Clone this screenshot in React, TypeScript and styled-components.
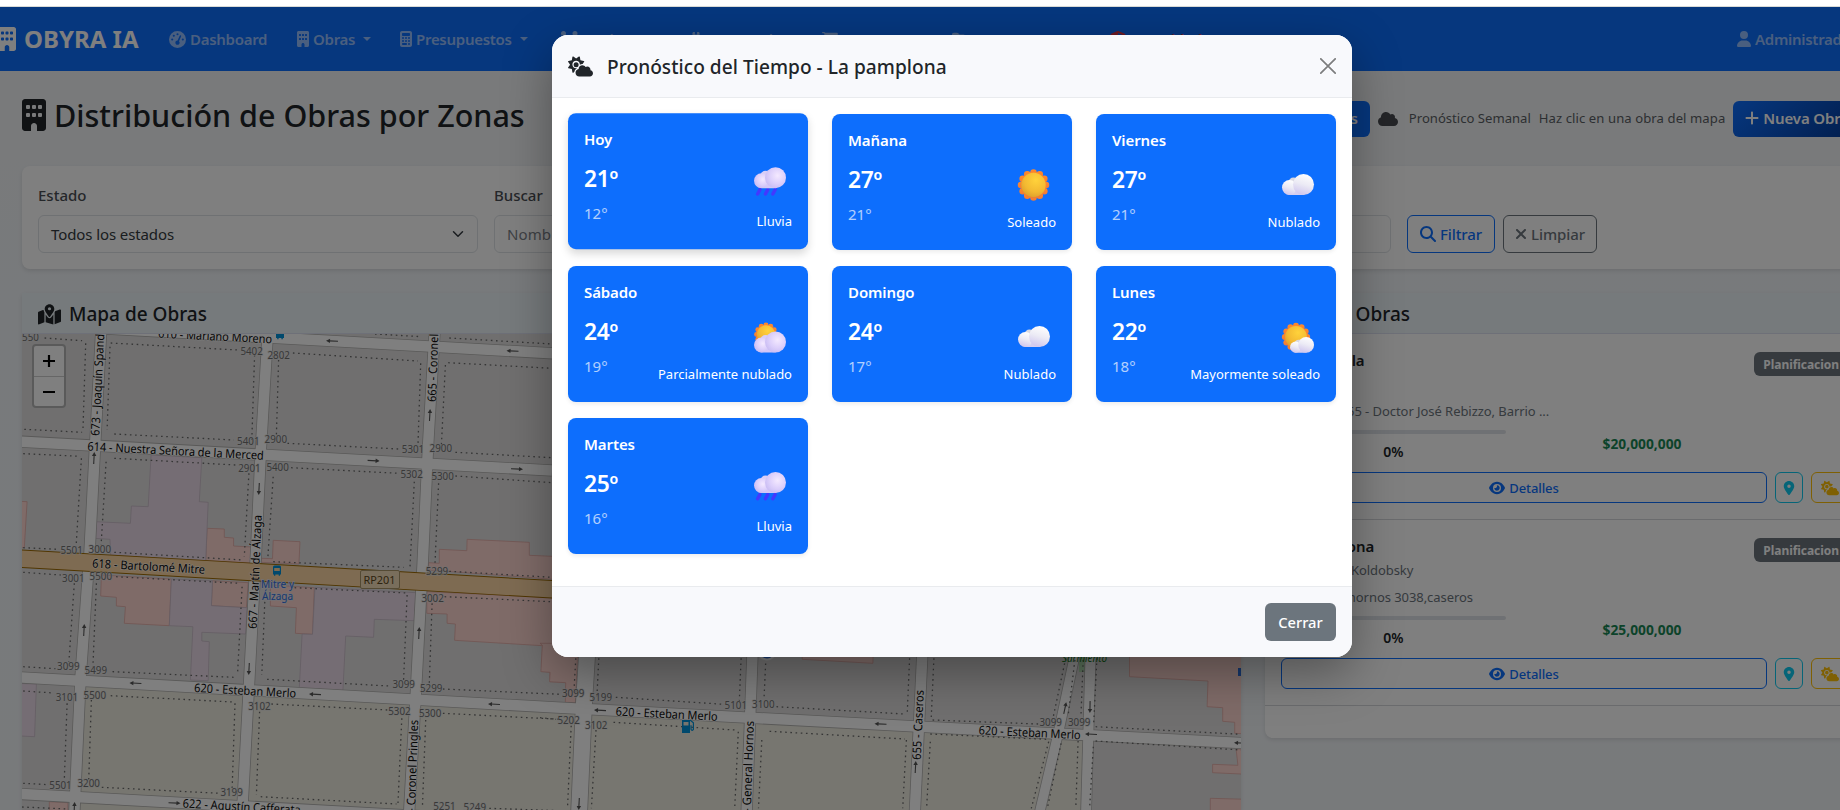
import React from "react";
import styled, { createGlobalStyle, css } from "styled-components";
import {
  FaBoxesStacked,
  FaCalculator,
  FaCartShopping,
  FaCloud,
  FaCloudSun,
  FaEye,
  FaFolderOpen,
  FaGaugeHigh,
  FaList,
  FaLocationDot,
  FaMagnifyingGlass,
  FaMapLocationDot,
  FaPlus,
  FaShieldHalved,
  FaUser,
  FaUsers,
  FaXmark,
} from "react-icons/fa6";

const GlobalStyle = createGlobalStyle`
  *, *::before, *::after { box-sizing: border-box; }
  html, body { margin: 0; padding: 0; overflow: hidden; background: #fff; }
  body { font-family: "Noto Sans", "Open Sans", sans-serif; color: #212529; font-size: 15px; }
  svg { flex: none; display: block; }
`;

/* ---------- Icons ---------- */

const BuildingIcon = ({ height }: { height: number }) => (
  <svg width={height * 0.75} height={height} viewBox="0 0 384 512" fill="currentColor">
    <path
      fillRule="evenodd"
      d="M48 0C21.5 0 0 21.5 0 48V464c0 26.5 21.5 48 48 48h96V432c0-26.5 21.5-48 48-48s48 21.5 48 48v80h96c26.5 0 48-21.5 48-48V48c0-26.5-21.5-48-48-48H48z
      M80 96h32q16 0 16 16v32q0 16-16 16H80q-16 0-16-16v-32q0-16 16-16z
      M176 96h32q16 0 16 16v32q0 16-16 16h-32q-16 0-16-16v-32q0-16 16-16z
      M272 96h32q16 0 16 16v32q0 16-16 16h-32q-16 0-16-16v-32q0-16 16-16z
      M80 224h32q16 0 16 16v32q0 16-16 16H80q-16 0-16-16v-32q0-16 16-16z
      M176 224h32q16 0 16 16v32q0 16-16 16h-32q-16 0-16-16v-32q0-16 16-16z
      M272 224h32q16 0 16 16v32q0 16-16 16h-32q-16 0-16-16v-32q0-16 16-16z"
    />
  </svg>
);

const CalculatorIcon = styled(FaCalculator)`
  width: 12px;
  height: 16px;
`;

const UserIcon = styled(FaUser)`
  width: 14px;
  height: 16px;
`;

const UsersIcon = styled(FaUsers)`
  width: 20px;
  height: 16px;
`;

const PlusIcon = styled(FaPlus)`
  width: 14px;
  height: 16px;
`;

const ClearIcon = styled(FaXmark)`
  width: 12px;
  height: 16px;
`;

/* ---------- Page frame ---------- */

const Window = styled.div`
  position: relative;
  width: 100%;
  height: 810px;
  overflow: hidden;
  display: flex;
  flex-direction: column;
`;

const TopStrip = styled.div`
  flex: none;
  height: 7px;
  background: #fff;
  border-bottom: 1px solid #d9dbd8;
`;

const Page = styled.div`
  flex: none;
  width: 1904px;
  height: 803px;
  background: linear-gradient(180deg, #f4f5f6 0, #f0f4f8 300px, #f1f4f7 100%);
`;

/* ---------- Navbar ---------- */

const Navbar = styled.nav`
  display: flex;
  align-items: center;
  height: 64px;
  padding-right: 40px;
  background: #0d6efd;
`;

const Brand = styled.div`
  display: flex;
  align-items: center;
  gap: 8px;
  width: 171px;
  margin-left: -2px;
  flex: none;
  color: #fff;
  font-size: 24px;
  font-weight: 700;
  line-height: 36px;
  white-space: nowrap;
`;

const NavLinks = styled.div`
  display: flex;
  flex: 1;
`;

const NavLink = styled.div<{ $width: number; $danger?: boolean }>`
  display: flex;
  align-items: center;
  gap: 4px;
  width: ${(p) => p.$width}px;
  flex: none;
  color: ${(p) => (p.$danger ? "#dc3545" : "rgba(255, 255, 255, 0.56)")};
  font-weight: 600;
  letter-spacing: -0.28px;
  line-height: 24px;
  white-space: nowrap;
`;

const Caret = styled.span`
  width: 0;
  height: 0;
  margin-left: 4px;
  border: 4px solid transparent;
  border-top-color: currentColor;
  border-bottom: 0;
`;

/* ---------- Page header ---------- */

const Heading = styled.header`
  display: flex;
  justify-content: space-between;
  align-items: center;
  height: 95px;
  padding: 0 40px 0 22px;
`;

const Title = styled.h1`
  display: flex;
  align-items: center;
  gap: 8px;
  margin: 0 0 8px;
  font-size: 30.5px;
  font-weight: 500;
  line-height: 38px;
  white-space: nowrap;
`;

const Actions = styled.div`
  display: flex;
  align-items: center;
  width: 561px;
`;

const PrimaryButton = styled.button<{ $shade?: boolean }>`
  display: flex;
  align-items: center;
  gap: 4px;
  height: 36px;
  padding: 0 12px 1px;
  border: 0;
  border-radius: 6px;
  background: ${(p) => (p.$shade ? "linear-gradient(135deg, #0d6efd, #053a96)" : "#0d6efd")};
  color: #fff;
  font: 600 15px "Noto Sans", sans-serif;
  letter-spacing: -0.15px;
  white-space: nowrap;
`;

const ForecastHint = styled.div`
  display: flex;
  align-items: center;
  margin: 0 8px 0 8px;
  color: #5b5f64;
  font-size: 13.1px;
  line-height: 20px;
  white-space: nowrap;
  svg { margin-right: 11px; }
  span { margin-bottom: 2px; }
  span + span { margin-left: 8px; letter-spacing: 0.08px; }
`;

/* ---------- Cards ---------- */

const cardShadow = css`
  box-shadow: 0 2px 4px rgba(0, 0, 0, 0.1);
`;

const FilterCard = styled.section`
  display: flex;
  gap: 16px;
  width: 1842px;
  height: 103px;
  margin-left: 22px;
  padding: 16px;
  border-radius: 8px;
  background: #fff;
  ${cardShadow}
`;

const Field = styled.div<{ $width: number }>`
  display: flex;
  flex-direction: column;
  gap: 8px;
  width: ${(p) => p.$width}px;
`;

const Label = styled.label`
  height: 25px;
  color: #4a4e54;
  font-weight: 500;
  line-height: 27px;
`;

const Control = styled.div<{ $muted?: boolean }>`
  display: flex;
  align-items: center;
  justify-content: space-between;
  height: 38px;
  padding: 0 13px 0 12px;
  border: 1px solid #dee2e6;
  border-radius: 6px;
  color: ${(p) => (p.$muted ? "#7d8288" : "#343a40")};
  letter-spacing: ${(p) => (p.$muted ? 0.1 : -0.1)}px;
`;

const FilterButtons = styled.div`
  display: flex;
  align-items: flex-end;
  gap: 8px;
`;

const OutlineButton = styled.button<{ $color: string; $width?: number; $small?: boolean }>`
  display: flex;
  align-items: center;
  justify-content: center;
  gap: 4px;
  ${(p) => (p.$width ? `width: ${p.$width}px;` : "flex: 1;")}
  height: ${(p) => (p.$small ? 31 : 38)}px;
  padding: 0;
  border: 1px solid ${(p) => p.$color};
  border-radius: 6px;
  background: transparent;
  color: ${(p) => p.$color};
  font: 500 ${(p) => (p.$small ? 13 : 15)}px "Noto Sans", sans-serif;
  letter-spacing: -0.1px;
  white-space: nowrap;
`;

const Columns = styled.div`
  display: flex;
  align-items: flex-start;
  gap: 24px;
  padding: 24px 0 0 22px;
`;

const MapCard = styled.section`
  width: 1219px;
  ${cardShadow}
`;

const ListCard = styled.section`
  width: 599px;
  height: 445px;
  border-radius: 8px;
  background: #fff;
  ${cardShadow}
`;

const CardHeader = styled.h5<{ $gap: number }>`
  display: flex;
  align-items: center;
  gap: ${(p) => p.$gap}px;
  height: 41px;
  margin: 0;
  padding: 2px 16px 0;
  border-bottom: 1px solid #dde1f0;
  background: #ecf4f8;
  font-size: 19px;
  font-weight: 500;
`;

/* ---------- Works list ---------- */

const WorkItem = styled.article`
  display: flex;
  flex-direction: column;
  height: 186px;
  padding: 16px 16px 0;
  border-bottom: 1px solid #d5d7da;
`;

const WorkTop = styled.div`
  display: flex;
  justify-content: space-between;
  height: 80px;
`;

const WorkName = styled.div`
  height: 24px;
  font-weight: 600;
  letter-spacing: -0.15px;
  line-height: 21px;
`;

const WorkMeta = styled.div`
  display: flex;
  align-items: center;
  gap: 4px;
  height: 20px;
  margin-bottom: 7px;
  color: #6c757d;
  font-size: 13px;
  letter-spacing: -0.06px;
  line-height: 20px;
  white-space: nowrap;
`;

const Status = styled.span`
  height: 24px;
  margin-top: 2px;
  padding: 0 9px;
  border-radius: 6px;
  background: #6c757d;
  color: #fff;
  font-size: 12px;
  font-weight: 700;
  letter-spacing: -0.05px;
  line-height: 25px;
`;

const WorkFigures = styled.div`
  display: flex;
  height: 42px;
  text-align: center;
`;

const Progress = styled.div`
  display: flex;
  flex-direction: column;
  gap: 7px;
  width: 225px;
  font-size: 14px;
  font-weight: 600;
  line-height: 22px;
`;

const ProgressTrack = styled.div`
  height: 4px;
  border-radius: 2px;
  background: #dfe3e8;
`;

const Budget = styled.div`
  width: 240px;
  margin-left: 16px;
  color: #198754;
  font-size: 13.8px;
  font-weight: 700;
  line-height: 28px;
`;

const WorkButtons = styled.div`
  display: flex;
  gap: 8px;
`;

/* ---------- Map ---------- */

const MapView = styled.div`
  position: relative;
  height: 476px;
  overflow: hidden;
  background: #e0dfdf;
`;

const ZoomControl = styled.div`
  position: absolute;
  left: 10px;
  top: 10px;
  display: flex;
  flex-direction: column;
  width: 34px;
  border: 2px solid #b4b4b4;
  border-radius: 4px;
  background: #fff;
`;

const ZoomStep = styled.div`
  display: flex;
  align-items: center;
  justify-content: center;
  height: 30px;
  color: #000;
  & + & { border-top: 1px solid #ccc; }
`;

/* ---------- Modal ---------- */

const Backdrop = styled.div`
  position: absolute;
  inset: 7px 0 0 0;
  display: flex;
  align-items: flex-start;
  padding: 28px 0 0 552px;
  background: rgba(0, 0, 0, 0.5);
`;

const Dialog = styled.div`
  display: flex;
  flex-direction: column;
  width: 800px;
  height: 622px;
  border-radius: 16px;
  background: #fff;
  overflow: hidden;
  box-shadow: 0 16px 48px rgba(0, 0, 0, 0.35);
`;

const DialogHeader = styled.div`
  display: flex;
  align-items: center;
  justify-content: space-between;
  height: 63px;
  padding: 0 16px;
  border-bottom: 1px solid #e9ebee;
  background: #f8f9fc;
`;

const DialogTitle = styled.h5`
  display: flex;
  align-items: center;
  gap: 14px;
  margin: 0;
  font-size: 19.1px;
  font-weight: 500;
  letter-spacing: 0.04px;
  svg { margin-top: 1px; }
  span { margin-top: 1px; }
`;

const DialogBody = styled.div`
  display: grid;
  grid-template-columns: repeat(3, 240px);
  grid-auto-rows: 136px;
  gap: 16px 24px;
  align-content: start;
  flex: 1;
  padding: 16px;
`;

const DialogFooter = styled.div`
  display: flex;
  align-items: center;
  justify-content: flex-end;
  height: 71px;
  padding: 0 16px 0;
  border-top: 1px solid #e9ebee;
  background: #f8f9fc;
`;

const CloseButton = styled.button`
  width: 71px;
  height: 38px;
  border: 0;
  border-radius: 6px;
  background: #6c757d;
  color: #fff;
  font: 500 14.7px "Noto Sans", sans-serif;
`;

const DayCard = styled.div<{ $raised?: boolean }>`
  padding: 16px;
  border-radius: 8px;
  background: #0d6efd;
  color: #fff;
  box-shadow: ${(p) => (p.$raised ? "0 4px 8px rgba(0,0,0,.15)" : "0 2px 4px rgba(0,0,0,.08)")};
  ${(p) => p.$raised && "transform: translateY(-0.8px);"}
`;

const DayName = styled.div`
  height: 27px;
  font-weight: 600;
  letter-spacing: -0.1px;
  line-height: 21px;
`;

const DayRow = styled.div`
  display: flex;
  justify-content: space-between;
`;

const Temps = styled.div`
  padding-top: 7px;
`;

const High = styled.div`
  height: 38px;
  font-size: 22.8px;
  font-weight: 600;
  letter-spacing: -0.3px;
  line-height: 31px;
`;

const Low = styled.div`
  font-size: 15px;
  line-height: 25px;
  opacity: 0.68;
`;

const Sky = styled.div`
  display: flex;
  flex-direction: column;
  align-items: flex-end;
  gap: 11px;
  padding-top: 11px;
  font-size: 13px;
  line-height: 22px;
  svg { margin-right: 6px; overflow: visible; }
`;

/* ---------- Weather drawings ---------- */

type SkyKind = "rain" | "sun" | "cloud" | "partly" | "mostly";

const Defs = () => (
  <defs>
    <radialGradient id="sunFace" cx="0.6" cy="0.3" r="0.8">
      <stop offset="0" stopColor="#ffd23b" />
      <stop offset="0.6" stopColor="#f3b932" />
      <stop offset="1" stopColor="#d89a2b" />
    </radialGradient>
    <linearGradient id="sunRim" x1="0" y1="0" x2="0" y2="1">
      <stop offset="0" stopColor="#ff8a2a" />
      <stop offset="1" stopColor="#f07a36" />
    </linearGradient>
    <linearGradient id="puffWhite" x1="0.7" y1="0" x2="0.4" y2="1">
      <stop offset="0" stopColor="#ffffff" />
      <stop offset="0.5" stopColor="#ecebf5" />
      <stop offset="1" stopColor="#cfc6ee" />
    </linearGradient>
    <radialGradient id="puffLilac" cx="0.6" cy="0.4" r="0.65">
      <stop offset="0" stopColor="#f4e9ff" />
      <stop offset="0.6" stopColor="#dccffb" />
      <stop offset="1" stopColor="#c9bcf3" />
    </radialGradient>
  </defs>
);

const Sun = ({ cx, cy, r }: { cx: number; cy: number; r: number }) => (
  <g>
    {Array.from({ length: 12 }, (_, i) => {
      const a = (i * Math.PI) / 6 - Math.PI / 2;
      return (
        <circle key={i} cx={cx + Math.cos(a) * r * 0.8} cy={cy + Math.sin(a) * r * 0.8} r={r * 0.21} fill="url(#sunRim)" />
      );
    })}
    <circle cx={cx} cy={cy} r={r * 0.84} fill="url(#sunRim)" />
    <circle cx={cx} cy={cy} r={r * 0.78} fill="url(#sunFace)" />
  </g>
);

const Puff = ({ x, y, scale = 1, lilac }: { x: number; y: number; scale?: number; lilac?: boolean }) => {
  const fill = lilac ? "url(#puffLilac)" : "url(#puffWhite)";
  return (
    <g transform={`translate(${x} ${y}) scale(${scale})`}>
      <rect x="4" y="10" width="20" height="11" rx="4" fill={lilac ? "#d3c7f7" : "#d5cef0"} />
      <circle cx="11.5" cy="8.5" r="5" fill={lilac ? "#d9cef6" : "#d9d9e2"} />
      <circle cx="7.4" cy="13.5" r="7.4" fill={fill} />
      <circle cx="21.5" cy="10.5" r="10.5" fill={fill} />
    </g>
  );
};

const SkyIcon = ({ kind }: { kind: SkyKind }) => (
  <svg width="32" height="32" viewBox="0 0 32 32">
    <Defs />
    {kind === "rain" && (
      <g>
        {[4.4, 12.2, 19.6].map((x) => (
          <path key={x} d={`M${x - 0.8} 26.8 l2.4 -4.4`} stroke="#4338ff" strokeWidth="3.4" strokeLinecap="round" />
        ))}
        <Puff x={0} y={0} lilac />
      </g>
    )}
    {kind === "sun" && <Sun cx={15.5} cy={17} r={15.6} />}
    {kind === "cloud" && <Puff x={0} y={6} />}
    {kind === "partly" && (
      <g>
        <Sun cx={12} cy={14.5} r={11.8} />
        <Puff x={0} y={11.5} lilac />
      </g>
    )}
    {kind === "mostly" && (
      <g>
        <Sun cx={14} cy={17} r={14} />
        <Puff x={8} y={17} scale={0.75} />
      </g>
    )}
  </svg>
);

/* ---------- Street map data ---------- */

type Frame = "upper" | "lower" | "right";

const frames: Record<Frame, { x: number; y: number; sx: number; sy: number }> = {
  upper: { x: 0, y: 320, sx: 1 / 2.8, sy: 1 / 3 },
  lower: { x: 0, y: 560, sx: 1 / 2.8, sy: 1 / 3 },
  right: { x: 540, y: 550, sx: 1 / 2.178, sy: 1 / 3 },
};

const place = (f: Frame, x: number, y: number) => [
  +(frames[f].x + x * frames[f].sx).toFixed(1),
  +(frames[f].y + y * frames[f].sy).toFixed(1),
];

const poly = (f: Frame, pts: number[]) => {
  const out: string[] = [];
  for (let i = 0; i < pts.length; i += 2) out.push(place(f, pts[i], pts[i + 1]).join(","));
  return out.join(" ");
};

const retail: [Frame, number[]][] = [
  ["upper", [580, 625, 628, 627, 628, 652, 654, 654, 654, 678, 720, 682, 720, 730, 576, 722]],
  ["upper", [765, 661, 840, 665, 837, 732, 730, 727, 733, 715, 763, 716]],
  ["upper", [1230, 688, 1307, 692, 1308, 658, 1482, 667, 1482, 706, 1700, 716, 1700, 790, 1200, 750, 1200, 728, 1230, 730]],
  ["upper", [40, 543, 76, 545, 68, 683, 40, 683]],
  ["lower", [284, 45, 480, 57, 474, 197, 348, 190, 351, 140, 326, 138, 326, 112, 282, 108]],
  ["lower", [595, 62, 695, 68, 690, 143, 592, 137]],
  ["lower", [757, 75, 880, 83, 875, 223, 827, 220, 830, 143, 757, 138]],
  ["lower", [1195, 95, 1640, 117, 1625, 390, 1596, 388, 1596, 367, 1540, 365, 1540, 336, 1517, 334, 1519, 257, 1273, 241, 1275, 192, 1252, 190, 1252, 162, 1195, 160]],
  ["right", [0, 280, 5, 285, 2, 365, 22, 367, 21, 395, 56, 398, 55, 457, 77, 458, 82, 310, 82, 280]],
  ["lower", [138, 725, 190, 728, 190, 760, 138, 760]],
  ["right", [571, 300, 726, 300, 725, 340, 571, 328]],
  ["right", [1284, 300, 1540, 300, 1540, 552, 1513, 550, 1513, 517, 1487, 514, 1487, 473, 1453, 470, 1455, 393, 1284, 380]],
  ["right", [1465, 643, 1520, 646, 1516, 597, 1540, 597, 1540, 673, 1465, 668]],
  ["right", [1460, 745, 1540, 748, 1540, 790, 1460, 790]],
];

const commercial: [Frame, number[]][] = [
  ["upper", [423, 405, 565, 413, 558, 545, 583, 547, 576, 722, 310, 705, 308, 658, 264, 655, 266, 605, 365, 610, 368, 558, 415, 560]],
  ["lower", [480, 57, 595, 62, 592, 137, 692, 143, 688, 222, 565, 217, 565, 243, 586, 245, 583, 362, 533, 360, 540, 200, 474, 197]],
  ["lower", [882, 82, 1165, 98, 1160, 182, 1048, 178, 1046, 232, 968, 228, 960, 392, 838, 384, 846, 222, 875, 223]],
  ["lower", [40, 370, 102, 372, 97, 530, 40, 527]],
];

const dotted: [Frame, number[][]][] = [
  ["upper", [
    [310, 69, 665, 90], [713, 105, 705, 360], [320, 342, 655, 360], [308, 80, 300, 330],
    [820, 99, 1170, 123], [1178, 130, 1170, 380], [805, 370, 1115, 387], [780, 120, 774, 345],
    [1255, 128, 1546, 145], [1247, 135, 1236, 375], [1275, 397, 1546, 413],
    [125, 54, 230, 62], [240, 70, 232, 335], [68, 328, 230, 337],
    [65, 401, 225, 409], [228, 415, 213, 680], [65, 683, 160, 688],
    [320, 415, 660, 435], [697, 460, 684, 710], [320, 697, 680, 720], [297, 425, 283, 675],
    [815, 443, 1115, 460], [1160, 485, 1148, 740], [765, 470, 750, 710], [765, 725, 1130, 742],
    [1275, 468, 1546, 488], [1228, 490, 1218, 730], [1050, 42, 1180, 50], [1258, 54, 1546, 72],
  ]],
  ["lower", [
    [65, 37, 170, 45], [208, 70, 193, 305], [65, 320, 155, 326],
    [325, 50, 670, 70], [678, 80, 665, 345], [315, 335, 655, 352], [270, 70, 260, 320],
    [825, 83, 1140, 99], [1140, 105, 1130, 360], [748, 358, 1090, 378], [742, 110, 733, 345],
    [1245, 110, 1546, 125], [1258, 34, 1546, 52], [1210, 130, 1202, 370], [1240, 387, 1568, 403],
    [65, 393, 150, 399], [188, 430, 180, 660], [65, 670, 135, 674],
    [310, 407, 655, 426], [658, 430, 650, 690], [285, 682, 615, 700], [256, 420, 248, 670],
    [760, 432, 1085, 450], [1125, 475, 1114, 735], [730, 710, 1110, 732], [727, 455, 718, 705],
    [1240, 460, 1568, 478], [1192, 480, 1183, 735], [62, 741, 190, 747], [1370, 745, 1568, 752],
  ]],
  ["right", [
    [78, 325, 74, 420], [128, 325, 124, 440], [438, 325, 434, 455], [165, 442, 400, 463],
    [492, 325, 488, 440], [805, 325, 800, 485], [515, 470, 795, 492],
    [858, 325, 852, 505], [855, 510, 1085, 522], [1145, 325, 1118, 500], [1165, 330, 1150, 500],
    [1183, 330, 1178, 500], [1213, 325, 1206, 520], [1210, 530, 1527, 553],
    [0, 503, 35, 508], [68, 527, 60, 775], [160, 517, 425, 540], [122, 540, 112, 775],
    [432, 545, 424, 775], [500, 544, 795, 567], [483, 570, 476, 775], [798, 570, 790, 775],
    [850, 552, 1105, 568], [850, 575, 842, 775], [1108, 575, 1070, 775], [1135, 580, 1105, 775],
    [1172, 573, 1167, 775], [1210, 573, 1527, 600], [1205, 590, 1197, 775],
  ]],
];

const roads: { d: string; w: number }[] = [
  { d: "M22 324 L332 341 L600 356", w: 10.5 },
  { d: "M10 441 L552 470.5", w: 10.5 },
  { d: "M10 676.8 L552 707.3 L926 727 L1250 743.5", w: 10.5 },
  { d: "M10 793.4 L183 803 L420 816", w: 10.5 },
  { d: "M101.5 325 L95 447 L89.5 553 L80.7 675 L74 820", w: 10.5 },
  { d: "M268 330 L261 447 L256 553 L249 685 L242 815", w: 10.5 },
  { d: "M435 325 L428 447 L422.7 563 L416 690 L409 815", w: 10.5 },
  { d: "M588 640 L584 703 L579 815", w: 16 },
  { d: "M753 640 L746.5 815", w: 10.5 },
  { d: "M923 640 L914.7 815", w: 10.5 },
  { d: "M1078 640 L1059 730 L1039 815", w: 9.5 },
  { d: "M1091 640 L1086 815", w: 10 },
];

const numbers: [Frame, number, number, string][] = [
  ["upper", 62, 62, "550"], ["upper", 673, 104, "5402"], ["upper", 749, 116, "2802"],
  ["upper", 664, 374, "5401"], ["upper", 741, 370, "2900"], ["upper", 1125, 399, "5301"],
  ["upper", 1203, 396, "2900"], ["upper", 667, 457, "2901"], ["upper", 746, 453, "5400"],
  ["upper", 1121, 474, "5302"], ["upper", 1208, 479, "5300"], ["upper", 169, 703, "5501"],
  ["upper", 248, 699, "3000"], ["lower", 174, 65, "3001"], ["lower", 251, 60, "5500"],
  ["lower", 1192, 44, "5299"], ["lower", 1180, 126, "3002"], ["lower", 160, 331, "3099"],
  ["lower", 237, 343, "5499"], ["lower", 1099, 383, "3099"], ["lower", 1176, 396, "5299"],
  ["lower", 156, 423, "3101"], ["lower", 234, 418, "5500"], ["lower", 695, 451, "3102"],
  ["lower", 1087, 464, "5302"], ["lower", 1173, 470, "5300"], ["lower", 138, 687, "5501"],
  ["lower", 217, 682, "3200"], ["lower", 617, 709, "3199"], ["lower", 1213, 750, "5251"],
  ["lower", 1298, 753, "5249"], ["right", 48, 441, "3099"], ["right", 108, 453, "5199"],
  ["right", 402, 477, "5101"], ["right", 462, 473, "3100"], ["right", 38, 522, "5202"],
  ["right", 98, 536, "3102"], ["right", 1088, 528, "3099"], ["right", 1150, 528, "3099"],
];

const streetNames: { x: number; y: number; a: number; len: number; t: string }[] = [
  { x: 158, y: 337.5, a: 3, len: 114, t: "610 - Mariano Moreno" },
  { x: 87.3, y: 450.5, a: 3, len: 176.5, t: "614 - Nuestra Señora de la Merced" },
  { x: 92, y: 567.5, a: 3.2, len: 113, t: "618 - Bartolomé Mitre" },
  { x: 194, y: 692, a: 3.2, len: 102, t: "620 - Esteban Merlo" },
  { x: 615.5, y: 715.5, a: 3, len: 102, t: "620 - Esteban Merlo" },
  { x: 978.5, y: 734.3, a: 2.8, len: 102, t: "620 - Esteban Merlo" },
  { x: 182.5, y: 807.5, a: 3.2, len: 118, t: "622 - Agustín Cafferata" },
  { x: 99.3, y: 436, a: -87.2, len: 102, t: "673 - Joaquín Spand" },
  { x: 256.8, y: 629, a: -87.5, len: 114, t: "667 - Martín de Álzaga" },
  { x: 436, y: 402, a: -88, len: 68, t: "665 - Coronel" },
  { x: 415, y: 812, a: -88, len: 92, t: "- Coronel Pringles" },
  { x: 750.7, y: 812, a: -88, len: 91, t: "- General Hornos" },
  { x: 920.7, y: 760, a: -87.5, len: 70, t: "655 - Caseros" },
];

const arrows: [number, number, number][] = [
  [332, 341, 183], [512.5, 351, 183], [373.6, 460.7, 3], [517, 469, 3],
  [135.4, 683.2, 183], [315, 694.3, 183], [494, 704.2, 183], [600, 710.3, 183],
  [880.5, 724, 183], [1091, 734.2, 183], [1240, 743, 183], [174.5, 803, 3],
  [94, 458, -87], [429.8, 415, -87], [259, 489, 93], [84, 630, -87], [249, 669, 93],
  [419, 633, -87], [74.3, 808, -87], [915.5, 767, -87], [1065, 708, -78], [1090, 707, 91], [579, 804, 93],
];

const StreetMap = () => (
  <svg width="1219" height="476" viewBox="22 334 1219 476" fontFamily="'Noto Sans', sans-serif">
    <rect x="22" y="334" width="1219" height="476" fill="#e0dfdf" />
    <polygon points="74,680 552,707 926,727 1087,736 1087,820 70,820" fill="#eeece0" />
    <g fill="#ffd6d1" stroke="#e3aaa3" strokeWidth="0.8">
      {retail.map(([f, p], i) => <polygon key={i} points={poly(f, p)} />)}
    </g>
    <g fill="#ebdbe8" stroke="#c9bac8" strokeWidth="0.8">
      {commercial.map(([f, p], i) => <polygon key={i} points={poly(f, p)} />)}
    </g>
    <rect x="1079" y="655" width="7" height="17" fill="#b5e3b5" />
    <g fill="none" stroke="#b3b2b0">
      {roads.map((r, i) => <path key={i} d={r.d} strokeWidth={r.w + 1.6} />)}
    </g>
    <g fill="none" stroke="#fff">
      {roads.map((r, i) => <path key={i} d={r.d} strokeWidth={r.w} />)}
    </g>
    <path d="M10 558 L600 592" fill="none" stroke="#a06b00" strokeWidth="18.4" />
    <path d="M10 558 L600 592" fill="none" stroke="#fcd6a4" strokeWidth="16.6" />
    <g stroke="#6a6a6a" strokeWidth="1.3" strokeDasharray="1.6 3.6">
      {dotted.map(([f, lines]) =>
        lines.map((l, i) => {
          const [x1, y1] = place(f, l[0], l[1]);
          const [x2, y2] = place(f, l[2], l[3]);
          return <line key={f + i} x1={x1} y1={y1} x2={x2} y2={y2} />;
        })
      )}
    </g>
    <g stroke="#555" fill="#555" strokeWidth="1.1">
      {arrows.map(([x, y, a], i) => (
        <g key={i} transform={`translate(${x} ${y}) rotate(${a})`}>
          <path d="M-6 0 H3" />
          <path d="M2 -2.2 L6 0 L2 2.2 Z" stroke="none" />
        </g>
      ))}
    </g>
    <g fontSize="10.7" fill="#717171" stroke="#e4e4e4" strokeWidth="1.6" paintOrder="stroke" strokeOpacity="0.75">
      {numbers.map(([f, x, y, t], i) => {
        const [px, py] = place(f, x, y);
        return <text key={i} x={px} y={py} textLength={t.length * 5.6} lengthAdjust="spacingAndGlyphs">{t}</text>;
      })}
    </g>
    <g fontSize="12" fill="#0c0c0c" stroke="#fff" strokeWidth="1.4" paintOrder="stroke" strokeOpacity="0.7">
      {streetNames.map((s, i) => (
        <text key={i} transform={`translate(${s.x} ${s.y}) rotate(${s.a})`} textLength={s.len} lengthAdjust="spacingAndGlyphs">{s.t}</text>
      ))}
    </g>
    <rect x="360.5" y="570.5" width="39" height="18" rx="1.5" fill="#f3dcb8" stroke="#a99468" strokeWidth="1" />
    <text x="363.5" y="584" fontSize="11.5" fill="#5d4720" textLength="32" lengthAdjust="spacingAndGlyphs">RP201</text>
    <g fill="#0092da">
      <path d="M276 334 h8 v4 h-1.2 v1.3 h-1.4 v-1.3 h-2.8 v1.3 h-1.4 v-1.3 H276z" />
      <path fillRule="evenodd" d="M273 567 q0 -1.5 1.5 -1.5 h5 q1.5 0 1.5 1.5 v7.5 h-1 v1.3 h-1.3 v-1.3 h-3.4 v1.3 h-1.3 v-1.3 h-1z M274.2 568 v3 h5.6 v-3z" />
      <path fillRule="evenodd" d="M682 720 h8 v13 h-8z M683.5 722 v3.5 h5 v-3.5z" />
      <path d="M690 720 l3.4 2.8 v6.5 q-1.5 2 -2.4 0 v-4" fill="none" stroke="#0092da" strokeWidth="1.2" />
    </g>
    <g fontSize="10.7" fill="#2f6fe0" textAnchor="middle" stroke="#e6e4ea" strokeWidth="1.4" paintOrder="stroke">
      <text x="277.6" y="588" textLength="33" lengthAdjust="spacingAndGlyphs">Mitre y</text>
      <text x="277.6" y="600" textLength="31" lengthAdjust="spacingAndGlyphs">Álzaga</text>
    </g>
    <circle cx="767" cy="651" r="9.5" fill="#fff" />
    <circle cx="767" cy="651" r="7.5" fill="#2c6fd8" />
    <text x="1062" y="662" fontSize="10.7" fontStyle="italic" fill="#12801a" textLength="45" lengthAdjust="spacingAndGlyphs">Sarmiento</text>
    <rect x="1238" y="668" width="5" height="8" fill="#2c6fd8" />
  </svg>
);

/* ---------- Content ---------- */

const works = [
  { name: "La manuela", client: "", address: "Mitre 2955 - Doctor José Rebizzo, Barrio ...", budget: "$20,000,000" },
  { name: "La pamplona", client: "Mariano Koldobsky", address: "General hornos 3038,caseros", budget: "$25,000,000" },
];

const days: { name: string; high: string; low: string; sky: SkyKind; label: string }[] = [
  { name: "Hoy", high: "21º", low: "12°", sky: "rain", label: "Lluvia" },
  { name: "Mañana", high: "27º", low: "21°", sky: "sun", label: "Soleado" },
  { name: "Viernes", high: "27º", low: "21°", sky: "cloud", label: "Nublado" },
  { name: "Sábado", high: "24º", low: "19°", sky: "partly", label: "Parcialmente nublado" },
  { name: "Domingo", high: "24º", low: "17°", sky: "cloud", label: "Nublado" },
  { name: "Lunes", high: "22º", low: "18°", sky: "mostly", label: "Mayormente soleado" },
  { name: "Martes", high: "25º", low: "16°", sky: "rain", label: "Lluvia" },
];

export default function App() {
  return (
    <Window>
      <GlobalStyle />
      <TopStrip />
      <Page>
        <Navbar>
          <Brand><BuildingIcon height={24} />OBYRA IA</Brand>
          <NavLinks>
            <NavLink $width={128}><FaGaugeHigh size={17} />Dashboard</NavLink>
            <NavLink $width={103}><BuildingIcon height={16} />Obras<Caret /></NavLink>
            <NavLink $width={159}><CalculatorIcon />Presupuestos<Caret /></NavLink>
            <NavLink $width={129}><UsersIcon />Equipos<Caret /></NavLink>
            <NavLink $width={134}><FaBoxesStacked size={16} />Inventario<Caret /></NavLink>
            <NavLink $width={130}><FaCartShopping size={16} />Reportes<Caret /></NavLink>
            <NavLink $width={158}><FaFolderOpen size={16} />Documentos<Caret /></NavLink>
            <NavLink $width={627} $danger><FaShieldHalved size={16} />Seguridad</NavLink>
            <NavLink $width={140}><UserIcon />Administrador</NavLink>
          </NavLinks>
        </Navbar>

        <Heading>
          <Title><BuildingIcon height={32} />Distribución de Obras por Zonas</Title>
          <Actions>
            <PrimaryButton>Obras</PrimaryButton>
            <ForecastHint>
              <FaCloud size={20} color="#484b50" />
              <span>Pronóstico Semanal</span>
              <span>Haz clic en una obra del mapa</span>
            </ForecastHint>
            <PrimaryButton $shade><PlusIcon />Nueva Obra</PrimaryButton>
          </Actions>
        </Heading>

        <FilterCard>
          <Field $width={440}>
            <Label>Estado</Label>
            <Control>
              Todos los estados
              <svg width="12" height="12" viewBox="0 0 16 16"><path d="m2 5 6 6 6-6" fill="none" stroke="#343a40" strokeWidth="2" strokeLinecap="round" strokeLinejoin="round" /></svg>
            </Control>
          </Field>
          <Field $width={897}>
            <Label>Buscar</Label>
            <Control $muted>Nombre de obra, cliente o dirección</Control>
          </Field>
          <FilterButtons>
            <OutlineButton $color="#0d6efd" $width={88}><FaMagnifyingGlass size={16} />Filtrar</OutlineButton>
            <OutlineButton $color="#6c757d" $width={94}><ClearIcon />Limpiar</OutlineButton>
          </FilterButtons>
        </FilterCard>

        <Columns>
          <MapCard>
            <CardHeader $gap={8}><FaMapLocationDot size={23} />Mapa de Obras</CardHeader>
            <MapView>
              <StreetMap />
              <ZoomControl>
                <ZoomStep><svg width="14" height="14" viewBox="0 0 14 14"><path d="M7 1v12M1 7h12" stroke="#000" strokeWidth="2.2" /></svg></ZoomStep>
                <ZoomStep><svg width="14" height="14" viewBox="0 0 14 14"><path d="M1 7h12" stroke="#000" strokeWidth="2" /></svg></ZoomStep>
              </ZoomControl>
            </MapView>
          </MapCard>
          <ListCard>
            <CardHeader $gap={7}><FaList size={20} />Lista Obras</CardHeader>
            {works.map((w) => (
              <WorkItem key={w.name}>
                <WorkTop>
                  <div>
                    <WorkName>{w.name}</WorkName>
                    <WorkMeta>{w.client && <><FaUser size={12} />{w.client}</>}</WorkMeta>
                    <WorkMeta><FaLocationDot size={12} />{w.address}</WorkMeta>
                  </div>
                  <Status>Planificacion</Status>
                </WorkTop>
                <WorkFigures>
                  <Progress><ProgressTrack />0%</Progress>
                  <Budget>{w.budget}</Budget>
                </WorkFigures>
                <WorkButtons>
                  <OutlineButton $small $color="#0d6efd"><FaEye size={16} />Detalles</OutlineButton>
                  <OutlineButton $small $color="#0dcaf0" $width={28}><FaLocationDot size={14} /></OutlineButton>
                  <OutlineButton $small $color="#ffc107" $width={37}><FaCloudSun size={18} /></OutlineButton>
                </WorkButtons>
              </WorkItem>
            ))}
          </ListCard>
        </Columns>
      </Page>

      <Backdrop>
        <Dialog>
          <DialogHeader>
            <DialogTitle><FaCloudSun size={25} /><span>Pronóstico del Tiempo - La pamplona</span></DialogTitle>
            <svg width="16" height="16" viewBox="0 0 16 16"><path d="M0.8 0.8 15.2 15.2M15.2 0.8 0.8 15.2" stroke="#7c7d7e" strokeWidth="1.7" strokeLinecap="round" /></svg>
          </DialogHeader>
          <DialogBody>
            {days.map((d, i) => (
              <DayCard key={d.name} $raised={i === 0}>
                <DayName>{d.name}</DayName>
                <DayRow>
                  <Temps>
                    <High>{d.high}</High>
                    <Low>{d.low}</Low>
                  </Temps>
                  <Sky>
                    <SkyIcon kind={d.sky} />
                    {d.label}
                  </Sky>
                </DayRow>
              </DayCard>
            ))}
          </DialogBody>
          <DialogFooter><CloseButton>Cerrar</CloseButton></DialogFooter>
        </Dialog>
      </Backdrop>
    </Window>
  );
}
